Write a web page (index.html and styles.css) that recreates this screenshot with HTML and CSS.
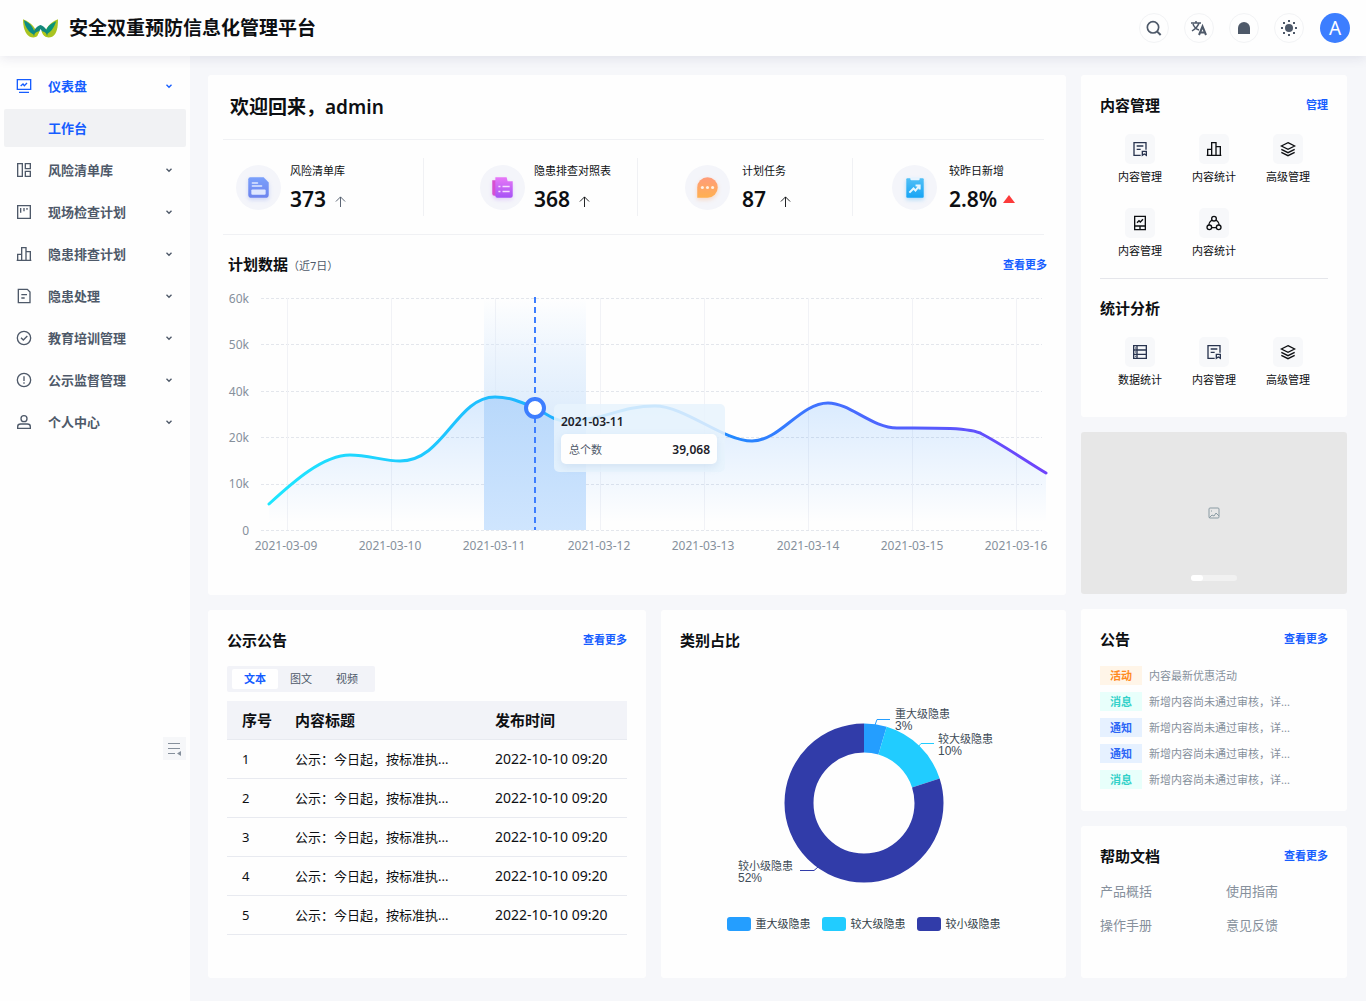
FILE: index.html
```html
<!DOCTYPE html>
<html lang="zh-CN">
<head>
<meta charset="utf-8">
<meta name="viewport" content="width=device-width, initial-scale=1">
<title>安全双重预防信息化管理平台</title>
<link rel="stylesheet" href="styles.css">
</head>
<body>
<svg class="sprite" aria-hidden="true">
  <symbol id="i-down" viewBox="0 0 48 48"><path d="M39 17 24 32 9 17"/></symbol>
  <symbol id="i-dash" viewBox="0 0 48 48"><path d="M4 5h40v29H4zM9 43h30M14 24l7-6 4 5 8-8"/></symbol>
  <symbol id="i-apps" viewBox="0 0 48 48"><path d="M5 5h14v38H5zM28 5h15v15H28zM28 28h15v15H28z"/></symbol>
  <symbol id="i-plan" viewBox="0 0 48 48"><path d="M5 5h38v38H5zM14 12v14M24 12v10M33 12v5"/></symbol>
  <symbol id="i-bars" viewBox="0 0 48 48"><path d="M5 25h12v18H5zM17 5h13v38H17zM30 17h13v26H30zM2 43h44"/></symbol>
  <symbol id="i-file" viewBox="0 0 48 48"><path d="M7 4h27l8 8v32H7zM16 20h17M16 30h10"/></symbol>
  <symbol id="i-check" viewBox="0 0 48 48"><circle cx="24" cy="24" r="20"/><path d="m15 23 7 7 12-12"/></symbol>
  <symbol id="i-warn" viewBox="0 0 48 48"><circle cx="24" cy="24" r="20"/><path d="M24 13v14M24 31v4"/></symbol>
  <symbol id="i-user" viewBox="0 0 48 48"><circle cx="24" cy="14" r="9"/><path d="M5 43v-5c0-5 4-8 9-8h20c5 0 9 3 9 8v5z"/></symbol>
  <symbol id="i-note" viewBox="0 0 48 48"><path d="M26 43H6V5h36v21M14 15h20M14 25h12M31 31h12v12l-6-4-6 4z"/></symbol>
  <symbol id="i-layers" viewBox="0 0 48 48"><path d="M24 5 44 15 24 25 4 15zM4 25l20 10 20-10M4 34l20 10 20-10"/></symbol>
  <symbol id="i-tablet" viewBox="0 0 48 48"><path d="M8 4h32v40H8zM8 33h32M24 33v11M15 23l6-6 4 4 8-8"/></symbol>
  <symbol id="i-share" viewBox="0 0 48 48"><circle cx="24" cy="11" r="7"/><circle cx="10" cy="37" r="7"/><circle cx="38" cy="37" r="7"/><path d="M18 15c-6 4-9 9-9 15M30 15c6 4 9 9 9 15M17 38h14"/></symbol>
  <symbol id="i-store" viewBox="0 0 48 48"><path d="M5 5h38v38H5zM5 18h38M5 31h38M15 5v38M9 12h2M9 24h2M9 37h2"/></symbol>
</svg>

<header class="topbar">
  <a class="brand" href="#">
    <svg class="logo" viewBox="0 0 36 19" aria-hidden="true">
      <path fill="#a9c422" d="M0 0c8 3 14 9 15 17-2 2-5 2-8 1C2 15 0 8 0 0z"/>
      <path fill="#0a8c86" d="M1 1c7 3 11 9 11 15C6 14 2 8 1 1z"/>
      <path fill="#a9c422" d="M36 0c-8 3-13 9-14 17 2 2 5 2 8 1 5-3 6-10 6-18z"/>
      <path fill="#0a9478" d="M34 2c-7 3-11 7-11 14 5-2 9-7 11-14z"/>
      <path fill="#14877a" d="M18 6c5 2 8 6 7 11-4-1-5-4-7-7-2 4-3 7-7 7-1-5 2-9 7-11z"/>
      <path fill="#b4c716" d="M12 18c3-1 4-3 5-6l-3 1c-2 1-3 3-2 5zM24 18c-3-1-4-3-5-6l3 1c2 1 3 3 2 5z"/>
    </svg>
    <span>安全双重预防信息化管理平台</span>
  </a>
  <div class="tools">
    <button class="tool" aria-label="搜索"><svg class="ico" viewBox="0 0 48 48"><circle cx="21" cy="22" r="17" stroke-width="5"/><path stroke-width="6" d="m33 34 11 11"/></svg></button>
    <button class="tool" aria-label="语言"><svg class="lang" viewBox="0 0 16 16" fill="none" stroke="currentColor"><path stroke-width="1.500" d="M0 3h10M5 1v2M8 3c-1 4-4 6-7 8M2 4c1 3 3 5 6 6"/><path stroke-width="2" d="m8 15 3.500-8.500L15 15M9 12.500h5"/></svg></button>
    <button class="tool" aria-label="通知消息"><svg class="solid" viewBox="0 0 16 16"><path d="M2 14V8a6 6 0 0 1 12 0v6z"/></svg></button>
    <button class="tool" aria-label="主题"><svg class="solid" viewBox="0 0 16 16"><circle cx="8" cy="8" r="4"/><path d="M7 0h2v2H7zM7 14h2v2H7zM0 7h2v2H0zM14 7h2v2h-2zM2 2h2v2H2zM12 2h2v2h-2zM2 12h2v2H2zM12 12h2v2h-2z"/></svg></button>
    <button class="avatar" aria-label="账户">A</button>
  </div>
</header>

<div class="layout">
  <aside class="sidebar">
    <nav class="menu">
      <a class="item active" href="#"><svg class="ico"><use href="#i-dash"/></svg><span>仪表盘</span><svg class="arrow"><use href="#i-down"/></svg></a>
      <a class="item sub" href="#"><span>工作台</span></a>
      <a class="item" href="#"><svg class="ico"><use href="#i-apps"/></svg><span>风险清单库</span><svg class="arrow"><use href="#i-down"/></svg></a>
      <a class="item" href="#"><svg class="ico"><use href="#i-plan"/></svg><span>现场检查计划</span><svg class="arrow"><use href="#i-down"/></svg></a>
      <a class="item" href="#"><svg class="ico"><use href="#i-bars"/></svg><span>隐患排查计划</span><svg class="arrow"><use href="#i-down"/></svg></a>
      <a class="item" href="#"><svg class="ico"><use href="#i-file"/></svg><span>隐患处理</span><svg class="arrow"><use href="#i-down"/></svg></a>
      <a class="item" href="#"><svg class="ico"><use href="#i-check"/></svg><span>教育培训管理</span><svg class="arrow"><use href="#i-down"/></svg></a>
      <a class="item" href="#"><svg class="ico"><use href="#i-warn"/></svg><span>公示监督管理</span><svg class="arrow"><use href="#i-down"/></svg></a>
      <a class="item" href="#"><svg class="ico"><use href="#i-user"/></svg><span>个人中心</span><svg class="arrow"><use href="#i-down"/></svg></a>
    </nav>
    <button class="fold" aria-label="收起菜单"><svg viewBox="0 0 14 14"><path fill="none" stroke="currentColor" d="M0 1.500h12M0 6.500h12M0 11.500h7"/><path fill="currentColor" d="M13 9v5l-4-2.500z"/></svg></button>
  </aside>

  <main class="content">
    <div class="center">
      <section class="card overview">
        <h1 class="welcome">欢迎回来，admin</h1>
        <div class="stats">
          <div class="stat">
            <svg class="badge" viewBox="0 0 44 44"><circle cx="22" cy="22" r="22"/><defs><linearGradient id="g1" x2="0" y2="1"><stop stop-color="#7aa0fb"/><stop offset="1" stop-color="#6d84ee"/></linearGradient></defs><path class="glow b1" fill="url(#g1)" d="M14 12h13l5 5v12a3 3 0 0 1-3 3H15a3 3 0 0 1-3-3V14a2 2 0 0 1 2-2z"/><path stroke="#dfe7ff" stroke-width="1.500" stroke-linecap="round" d="M16 17.500h5M16 20.500h9"/><rect x="15" y="24" width="14" height="5" rx="1" fill="#dfe7ff"/></svg>
            <div><p>风险清单库</p><strong>373</strong><svg class="up slate" viewBox="0 0 12 12"><path d="M6 12V1M1 6l5-5 5 5"/></svg></div>
          </div>
          <div class="stat">
            <svg class="badge" viewBox="0 0 44 44"><circle cx="22" cy="22" r="22"/><defs><linearGradient id="g2" x2="0" y2="1"><stop stop-color="#e878f7"/><stop offset="1" stop-color="#a653f5"/></linearGradient></defs><path class="glow b2" fill="#d94fd0" d="M12 15h7v15h-5a2 2 0 0 1-2-2z"/><path class="glow b2" fill="url(#g2)" d="M15 12h11l1 4h5v14a2 2 0 0 1-2 2H17a2 2 0 0 1-2-2z"/><path stroke="#f6dcff" stroke-width="1.500" d="M18 21h2M22 21h7M18 26h2M22 26h7"/></svg>
            <div><p>隐患排查对照表</p><strong>368</strong><svg class="up" viewBox="0 0 12 12"><path d="M6 12V1M1 6l5-5 5 5"/></svg></div>
          </div>
          <div class="stat">
            <svg class="badge" viewBox="0 0 44 44"><circle cx="22" cy="22" r="22"/><defs><linearGradient id="g3" x2="0" y2="1"><stop stop-color="#ff9c7b"/><stop offset="1" stop-color="#ffb050"/></linearGradient></defs><path class="glow b3" fill="url(#g3)" d="M12 22a10 10 0 1 1 10 10H12z"/><g fill="#fff0e2"><circle class="dot" cx="17" cy="22" r="1.500"/><circle class="dot" cx="22" cy="22" r="1.500"/><circle class="dot" cx="27" cy="22" r="1.500"/></g></svg>
            <div><p>计划任务</p><strong>87</strong><svg class="up far" viewBox="0 0 12 12"><path d="M6 12V1M1 6l5-5 5 5"/></svg></div>
          </div>
          <div class="stat">
            <svg class="badge" viewBox="0 0 44 44"><circle cx="22" cy="22" r="22"/><defs><linearGradient id="g4" x2="0" y2="1"><stop stop-color="#52c0f6"/><stop offset="1" stop-color="#16a4f5"/></linearGradient></defs><rect class="glow b4" x="14" y="13" width="17" height="19" rx="1" fill="url(#g4)"/><rect x="18" y="12" width="9" height="3" rx="1" fill="#e6f4ff"/><path fill="none" stroke="#e6f7ff" stroke-width="2" d="m17 27 4-4 2 2 4-5M23 20h4v4"/></svg>
            <div><p>较昨日新增</p><strong>2.8%</strong><i class="rise"></i></div>
          </div>
        </div>
        <div class="head trend-head"><h2>计划数据<small>（近7日）</small></h2><a href="#">查看更多</a></div>
        <svg class="trend" viewBox="0 0 858 275" role="img" aria-label="计划数据折线图">
          <defs>
            <linearGradient id="line" gradientUnits="userSpaceOnUse" x1="61" x2="839" y1="0" y2="0"><stop offset="0" stop-color="#1ee7ff"/><stop offset=".33" stop-color="#1fb6ff"/><stop offset=".6" stop-color="#2488ff"/><stop offset=".7" stop-color="#3f73ff"/><stop offset="1" stop-color="#6f42fb"/></linearGradient>
            <linearGradient id="area" gradientUnits="userSpaceOnUse" x1="0" x2="0" y1="112" y2="238"><stop offset="0" stop-color="#1180ff" stop-opacity=".16"/><stop offset="1" stop-color="#1180ff" stop-opacity="0"/></linearGradient>
            <linearGradient id="band" x2="0" y2="1"><stop offset="0" stop-color="#cfe5fd" stop-opacity="0"/><stop offset=".5" stop-color="#d6e8fb" stop-opacity=".8"/><stop offset="1" stop-color="#cfe5fe"/></linearGradient>
            <linearGradient id="deep" x2="0" y2="1"><stop offset="0" stop-color="#b8d8fb"/><stop offset="1" stop-color="#cfe5fe"/></linearGradient>
            <clipPath id="day"><rect x="276" y="13" width="102" height="232"/></clipPath>
          </defs>
          <path class="rows" d="M53 13.500h781M53 59.500h781M53 106.500h781M53 152.500h781M53 199.500h781M53 245.500h781"/>
          <path class="cols" d="M79.500 13v232M183.500 13v232M287.500 13v232M392.500 13v232M496.500 13v232M600.500 13v232M704.500 13v232M808.500 13v232"/>
          <path fill="url(#area)" d="M61 219C85 197 115 170 142 170C160 170 176 176 192 176C236 176 248 112 287 112C302 112 313 117 327 123C338 128 345 136 358 136C395 136 412 121 447 121C477 121 515 156 544 156C572 156 592 118 620 118C642 118 664 143 689 143C716 143 762 142 774 149C795 160 818 176 838 188V238H61z"/>
          <rect fill="url(#band)" x="276" y="13" width="102" height="232"/>
          <path clip-path="url(#day)" fill="url(#deep)" d="M192 176C236 176 248 112 287 112C302 112 313 117 327 123C338 128 345 136 358 136L400 134V245H192z"/>
          <path fill="none" stroke="url(#line)" stroke-width="3" stroke-linecap="round" d="M61 219C85 197 115 170 142 170C160 170 176 176 192 176C236 176 248 112 287 112C302 112 313 117 327 123C338 128 345 136 358 136C395 136 412 121 447 121C477 121 515 156 544 156C572 156 592 118 620 118C642 118 664 143 689 143C716 143 762 142 774 149C795 160 818 176 838 188"/>
          <path stroke="#3d7eff" stroke-width="2" stroke-dasharray="6 4" d="M327 12v233"/>
          <circle cx="327" cy="123" r="9" fill="#fff" stroke="#3d7eff" stroke-width="4"/>
          <g class="axis" text-anchor="end"><text x="41" y="18">60k</text><text x="41" y="64">50k</text><text x="41" y="111">40k</text><text x="41" y="157">20k</text><text x="41" y="203">10k</text><text x="41" y="250">0</text></g>
          <g class="axis" text-anchor="middle"><text x="78" y="265">2021-03-09</text><text x="182" y="265">2021-03-10</text><text x="286" y="265">2021-03-11</text><text x="391" y="265">2021-03-12</text><text x="495" y="265">2021-03-13</text><text x="600" y="265">2021-03-14</text><text x="704" y="265">2021-03-15</text><text x="808" y="265">2021-03-16</text></g>
          <g class="tip">
            <rect class="tip-back" x="346" y="119" width="171" height="68" rx="5"/>
            <text class="strong" x="353" y="141">2021-03-11</text>
            <rect class="tip-box" x="353" y="149" width="156" height="30" rx="5"/>
            <text class="tip-name" x="361" y="169">总个数</text><text class="strong" x="502" y="169" text-anchor="end">39,068</text>
          </g>
        </svg>
      </section>

      <div class="lower">
        <section class="card posts">
          <div class="head"><h2>公示公告</h2><a href="#">查看更多</a></div>
          <div class="tabs"><button class="on">文本</button><button>图文</button><button>视频</button></div>
          <table>
            <thead><tr><th>序号</th><th>内容标题</th><th>发布时间</th></tr></thead>
            <tbody>
              <tr><td>1</td><td>公示：今日起，按标准执...</td><td>2022-10-10 09:20</td></tr>
              <tr><td>2</td><td>公示：今日起，按标准执...</td><td>2022-10-10 09:20</td></tr>
              <tr><td>3</td><td>公示：今日起，按标准执...</td><td>2022-10-10 09:20</td></tr>
              <tr><td>4</td><td>公示：今日起，按标准执...</td><td>2022-10-10 09:20</td></tr>
              <tr><td>5</td><td>公示：今日起，按标准执...</td><td>2022-10-10 09:20</td></tr>
            </tbody>
          </table>
        </section>
        <section class="card share">
          <div class="head"><h2>类别占比</h2></div>
          <svg class="donut" viewBox="0 0 405 200" role="img" aria-label="类别占比环形图">
            <g fill="none" stroke-width="29" transform="rotate(-90 203 108)">
              <circle cx="203" cy="108" r="65" pathLength="65" stroke="#249eff" stroke-dasharray="3 62"/>
              <circle cx="203" cy="108" r="65" pathLength="65" stroke="#21ccff" stroke-dasharray="10 55" stroke-dashoffset="-3"/>
              <circle cx="203" cy="108" r="65" pathLength="65" stroke="#313ca9" stroke-dasharray="52 13" stroke-dashoffset="-13"/>
            </g>
            <g fill="none"><path stroke="#249eff" d="m214 30 2-5.500h13"/><path stroke="#21ccff" d="m257 52 3-3.500h13"/><path stroke="#313ca9" d="m157 172-4 3.500h-14"/></g>
            <text x="234" y="23">重大级隐患</text><text class="pct" x="234" y="35">3%</text>
            <text x="277" y="48">较大级隐患</text><text class="pct" x="277" y="60">10%</text>
            <text x="77" y="175">较小级隐患</text><text class="pct" x="77" y="187">52%</text>
          </svg>
          <ul class="legend"><li><i class="c1"></i>重大级隐患</li><li><i class="c2"></i>较大级隐患</li><li><i class="c3"></i>较小级隐患</li></ul>
        </section>
      </div>
    </div>

    <div class="side">
      <section class="card quick">
        <div class="head"><h2>内容管理</h2><a href="#">管理</a></div>
        <div class="grid">
          <a href="#"><i><svg class="ico navy"><use href="#i-note"/></svg></i>内容管理</a>
          <a href="#"><i><svg class="ico"><use href="#i-bars"/></svg></i>内容统计</a>
          <a href="#"><i><svg class="ico"><use href="#i-layers"/></svg></i>高级管理</a>
          <a href="#"><i><svg class="ico"><use href="#i-tablet"/></svg></i>内容管理</a>
          <a href="#"><i><svg class="ico"><use href="#i-share"/></svg></i>内容统计</a>
        </div>
        <div class="head second"><h2>统计分析</h2></div>
        <div class="grid">
          <a href="#"><i><svg class="ico navy"><use href="#i-store"/></svg></i>数据统计</a>
          <a href="#"><i><svg class="ico navy"><use href="#i-note"/></svg></i>内容管理</a>
          <a href="#"><i><svg class="ico"><use href="#i-layers"/></svg></i>高级管理</a>
        </div>
      </section>
      <section class="banner" aria-label="轮播图">
        <svg viewBox="0 0 12 12"><rect x="1" y="1" width="10" height="10" rx="1"/><path d="m1 11 3-3 2 1 2-3 3 3M3 4h1"/></svg>
        <div class="pager"><i></i></div>
      </section>
      <section class="card news">
        <div class="head"><h2>公告</h2><a href="#">查看更多</a></div>
        <ul>
          <li><b class="orange">活动</b>内容最新优惠活动</li>
          <li><b class="cyan">消息</b>新增内容尚未通过审核，详...</li>
          <li><b class="blue">通知</b>新增内容尚未通过审核，详...</li>
          <li><b class="blue">通知</b>新增内容尚未通过审核，详...</li>
          <li><b class="cyan">消息</b>新增内容尚未通过审核，详...</li>
        </ul>
      </section>
      <section class="card help">
        <div class="head"><h2>帮助文档</h2><a href="#">查看更多</a></div>
        <div class="docs"><a href="#">产品概括</a><a href="#">使用指南</a><a href="#">操作手册</a><a href="#">意见反馈</a></div>
      </section>
    </div>
  </main>
</div>
</body>
</html>
```
FILE: styles.css
```css
:root {
  --primary: #165dff;
  --ink: #0d0f12;
  --slate: #4e5969;
  --muted: #86909c;
  --line: #e8eaf0;
}
* { box-sizing: border-box; }
body {
  margin: 0;
  min-height: 100vh;
  display: flex;
  flex-direction: column;
  background: #f6f7fa;
  color: var(--ink);
  font: 11px/16px "Noto Sans", "Noto Sans CJK SC", sans-serif;
}
h1, h2, p, ul { margin: 0; padding: 0; }
ul { list-style: none; }
a { color: inherit; text-decoration: none; }
button { border: 0; padding: 0; font: inherit; color: inherit; background: none; cursor: pointer; }
.sprite { position: absolute; width: 0; height: 0; }
.ico, .arrow {
  width: 16px;
  height: 16px;
  flex: none;
  fill: none;
  stroke: currentColor;
  stroke-width: 4;
}
.arrow { width: 8px; height: 8px; margin-left: auto; stroke-width: 8; }

/* Top bar */
.topbar {
  position: relative;
  z-index: 1;
  height: 56px;
  padding: 0 16px 0 23px;
  display: flex;
  align-items: center;
  justify-content: space-between;
  background: #fefefe;
  box-shadow: 0 1px 12px rgba(30, 35, 90, .12);
}
.brand { display: flex; align-items: center; gap: 11px; font-size: 19px; line-height: 28px; font-weight: 600; }
.logo { width: 35px; height: 19px; }
.tools { display: flex; gap: 15px; }
.tool, .avatar {
  width: 30px;
  height: 30px;
  display: grid;
  place-items: center;
  border-radius: 50%;
  color: var(--slate);
}
.tool { border: 1px solid #f2f3f5; }
.solid { width: 16px; height: 16px; fill: currentColor; }
.lang { width: 16px; height: 16px; }
.avatar { margin-left: 1px; background: #3c7eff; color: #fff; font-size: 19px; line-height: 28px; }

/* Sidebar */
.layout { flex: 1; display: flex; }
.sidebar { width: 190px; flex: none; padding: 11px 4px; background: #fefefe; }
.menu { display: flex; flex-direction: column; gap: 4px; }
.item {
  height: 38px;
  padding: 0 13px 0 12px;
  display: flex;
  align-items: center;
  gap: 16px;
  border-radius: 2px;
  color: var(--slate);
  font-size: 13px;
  font-weight: 600;
}
.item.active, .item.sub { color: var(--primary); }
.item.sub { padding-left: 44px; background: #f1f2f4; }
.fold {
  width: 23px;
  height: 23px;
  margin: 296px 0 0 auto;
  display: grid;
  place-items: center;
  background: #f6f7f9;
  color: var(--muted);
}
.fold svg { width: 14px; height: 14px; }

/* Page grid */
.content {
  flex: 1;
  min-width: 0;
  padding: 19px 19px 23px 18px;
  display: grid;
  grid-template-columns: minmax(0, 1fr) 266px;
  gap: 15px;
}
.center, .side { display: flex; flex-direction: column; gap: 15px; min-width: 0; }
.card { background: #fefefe; border-radius: 3px; padding: 15px 19px 0; }
.head { height: 30px; display: flex; align-items: center; justify-content: space-between; }
.head h2 { font-size: 15px; line-height: 22px; font-weight: 700; }
.head small { font-size: 11px; font-weight: 400; color: var(--slate); }
.head a { color: var(--primary); font-weight: 600; }

/* Overview */
.overview { padding: 0 0 35px; }
.welcome {
  margin: 0 22px 0 15px;
  padding: 18px 7px;
  border-bottom: 1px solid #f0f1f4;
  font-size: 19px;
  line-height: 28px;
  font-weight: 600;
}
.stats {
  margin: 0 22px 0 15px;
  padding: 18px 0;
  display: grid;
  grid-template-columns: 201fr 214fr 215fr 191fr;
  border-bottom: 1px solid #f0f1f4;
}
.stat { height: 58px; display: flex; align-items: center; gap: 9px; border-right: 1px solid #f0f1f4; padding-left: 13px; }
.stat:nth-child(2) { padding-left: 56px; }
.stat:nth-child(3) { padding-left: 47px; gap: 12px; }
.stat:nth-child(4) { padding-left: 39px; border-right: 0; gap: 12px; }
.stat strong { font-size: 21px; line-height: 28px; font-weight: 600; }
.stat p { line-height: 20px; padding-bottom: 4px; }
.badge { width: 45px; height: 45px; flex: none; }
.badge > circle { fill: #f4f5fa; }
.b1 { filter: drop-shadow(0 2px 2px rgba(110, 135, 240, .3)); }
.b2 { filter: drop-shadow(0 2px 2px rgba(170, 85, 245, .2)); }
.b3 { filter: drop-shadow(0 2px 2px rgba(255, 150, 80, .3)); }
.b4 { filter: drop-shadow(0 2px 2px rgba(20, 160, 245, .3)); }
.up { width: 11px; height: 11px; margin-left: 9px; fill: none; stroke: var(--ink); }
.up.slate { stroke: var(--slate); }
.up.far { margin-left: 14px; }
.rise {
  display: inline-block;
  margin: 0 0 4px 6px;
  border: 6px solid transparent;
  border-top: 0;
  border-bottom: 8px solid #fc3b3b;
}
.trend-head { height: 40px; margin-top: 10px; padding: 0 19px 0 20px; }
.trend { display: block; width: 100%; height: auto; }
.trend text { font-size: 12px; }
.rows, .cols { fill: none; stroke: #e3e6ec; }
.rows { stroke-dasharray: 3 2; }
.cols { stroke: #f1f2f6; }
.axis { fill: var(--muted); }
.tip-back { fill: #e8f3fd; fill-opacity: .86; }
.tip-box { fill: #fefefe; filter: drop-shadow(0 3px 4px rgba(60, 110, 170, .12)); }
.trend .strong { font-weight: 600; fill: #1d2129; }
.trend .tip-name { font-size: 11px; fill: var(--slate); }

/* Lower cards */
.lower { flex: 1; display: grid; grid-template-columns: 438fr 405fr; gap: 15px; }
.posts { padding-bottom: 43px; }
.tabs { width: max-content; margin-top: 11px; padding: 3px 5px; display: flex; background: #f2f3f8; border-radius: 2px; color: var(--slate); }
.tabs button { width: 46px; height: 20px; border-radius: 2px; }
.tabs .on { background: #fff; color: var(--primary); font-weight: 600; }
table { width: 100%; margin-top: 9px; border-collapse: collapse; table-layout: fixed; }
th, td { height: 39px; padding: 0; border-bottom: 1px solid var(--line); text-align: left; white-space: nowrap; font-size: 13px; line-height: 20px; }
th { height: 38px; background: #f2f3f8; font-size: 15px; font-weight: 700; }
th:first-child, td:first-child { width: 17%; padding-left: 15px; }
th:nth-child(3), td:nth-child(3) { width: 33%; }
td:nth-child(3) { font-size: 14px; }
.donut { display: block; width: calc(100% + 38px); height: auto; margin: 40px -19px 0; fill: #4b5a66; }
.donut text { font-size: 11px; fill: #3f4c57; }
.donut .pct { font-family: "Liberation Sans", sans-serif; font-size: 12px; }
.legend { display: flex; justify-content: center; gap: 11px; margin-top: 21px; color: #333f49; }
.legend li { display: flex; align-items: center; gap: 5px; }
.legend i { width: 24px; height: 14px; border-radius: 3px; }
.c1 { background: #249eff; }
.c2 { background: #21ccff; }
.c3 { background: #313ca9; }

/* Right column */
.quick { padding-bottom: 29px; }
.grid { display: grid; grid-template-columns: repeat(3, 1fr); row-gap: 23px; padding: 14px 3px 0; }
.grid a { display: flex; flex-direction: column; align-items: center; gap: 5px; white-space: nowrap; }
.grid i { width: 30px; height: 30px; display: grid; place-items: center; border-radius: 5px; background: #f7f8fa; }
.navy { color: #29344f; }
.second { margin-top: 19px; padding-top: 14px; height: 45px; border-top: 1px solid #e5e6eb; }
.banner { height: 162px; padding-bottom: 13px; display: flex; flex-direction: column; align-items: center; justify-content: space-between; background: #e7e7e7; border-radius: 3px; }
.banner svg { width: 12px; height: 12px; margin-top: 75px; fill: none; stroke: #8a9ba3; }
.pager { width: 46px; height: 6px; border-radius: 3px; background: #f1f1f1; }
.pager i { display: block; width: 12px; height: 6px; border-radius: 3px; background: #fff; }
.news { padding-bottom: 22px; }
.news ul { margin-top: 12px; display: flex; flex-direction: column; gap: 7px; color: var(--muted); }
.news li { display: flex; gap: 7px; line-height: 19px; white-space: nowrap; }
.news b { width: 42px; text-align: center; font-weight: 600; }
.orange { background: #fff5e8; color: #ff8a1f; }
.cyan { background: #e8fffb; color: #33d1c9; }
.blue { background: #e6f1ff; color: #2b66f6; }
.help { flex: 1; }
.docs { display: grid; grid-template-columns: 126px 1fr; row-gap: 14px; margin-top: 10px; color: var(--muted); font-size: 13px; line-height: 20px; }
```
